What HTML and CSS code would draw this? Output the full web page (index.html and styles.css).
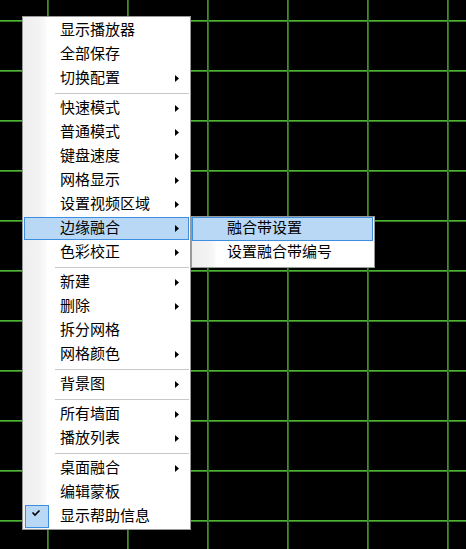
FILE: index.html
```html
<!DOCTYPE html>
<html lang="zh-CN">
<head>
<meta charset="utf-8">
<title>菜单</title>
<link rel="stylesheet" href="styles.css">
</head>
<body>
<div class="desktop">
  <div class="menu main-menu">
    <div class="item"><span class="label">显示播放器</span></div>
    <div class="item"><span class="label">全部保存</span></div>
    <div class="item"><span class="label">切换配置</span><svg class="arrow" width="4" height="7" viewBox="0 0 4 7"><polygon points="0,0 4,3.5 0,7"/></svg></div>
    <div class="sep"></div>
    <div class="item"><span class="label">快速模式</span><svg class="arrow" width="4" height="7" viewBox="0 0 4 7"><polygon points="0,0 4,3.5 0,7"/></svg></div>
    <div class="item"><span class="label">普通模式</span><svg class="arrow" width="4" height="7" viewBox="0 0 4 7"><polygon points="0,0 4,3.5 0,7"/></svg></div>
    <div class="item"><span class="label">键盘速度</span><svg class="arrow" width="4" height="7" viewBox="0 0 4 7"><polygon points="0,0 4,3.5 0,7"/></svg></div>
    <div class="item"><span class="label">网格显示</span><svg class="arrow" width="4" height="7" viewBox="0 0 4 7"><polygon points="0,0 4,3.5 0,7"/></svg></div>
    <div class="item"><span class="label">设置视频区域</span><svg class="arrow" width="4" height="7" viewBox="0 0 4 7"><polygon points="0,0 4,3.5 0,7"/></svg></div>
    <div class="item hl"><span class="label">边缘融合</span><svg class="arrow" width="4" height="7" viewBox="0 0 4 7"><polygon points="0,0 4,3.5 0,7"/></svg></div>
    <div class="item"><span class="label">色彩校正</span><svg class="arrow" width="4" height="7" viewBox="0 0 4 7"><polygon points="0,0 4,3.5 0,7"/></svg></div>
    <div class="sep"></div>
    <div class="item"><span class="label">新建</span><svg class="arrow" width="4" height="7" viewBox="0 0 4 7"><polygon points="0,0 4,3.5 0,7"/></svg></div>
    <div class="item"><span class="label">删除</span><svg class="arrow" width="4" height="7" viewBox="0 0 4 7"><polygon points="0,0 4,3.5 0,7"/></svg></div>
    <div class="item"><span class="label">拆分网格</span></div>
    <div class="item"><span class="label">网格颜色</span><svg class="arrow" width="4" height="7" viewBox="0 0 4 7"><polygon points="0,0 4,3.5 0,7"/></svg></div>
    <div class="sep"></div>
    <div class="item"><span class="label">背景图</span><svg class="arrow" width="4" height="7" viewBox="0 0 4 7"><polygon points="0,0 4,3.5 0,7"/></svg></div>
    <div class="sep"></div>
    <div class="item"><span class="label">所有墙面</span><svg class="arrow" width="4" height="7" viewBox="0 0 4 7"><polygon points="0,0 4,3.5 0,7"/></svg></div>
    <div class="item"><span class="label">播放列表</span><svg class="arrow" width="4" height="7" viewBox="0 0 4 7"><polygon points="0,0 4,3.5 0,7"/></svg></div>
    <div class="sep"></div>
    <div class="item"><span class="label">桌面融合</span><svg class="arrow" width="4" height="7" viewBox="0 0 4 7"><polygon points="0,0 4,3.5 0,7"/></svg></div>
    <div class="item"><span class="label">编辑蒙板</span></div>
    <div class="item checked"><span class="check"><svg width="24" height="23" viewBox="0 0 24 23"><path d="M7.5 7.5 L10 10 L14.5 5.5" fill="none" stroke="#000" stroke-width="1.6"/></svg></span><span class="label">显示帮助信息</span></div>
  </div>
  <div class="menu sub-menu">
    <div class="sub-item hl"><span class="label">融合带设置</span></div>
    <div class="sub-item"><span class="label">设置融合带编号</span></div>
  </div>
</div>
</body>
</html>
```
FILE: styles.css
```css
html, body {
  margin: 0;
  padding: 0;
}

body {
  width: 466px;
  height: 549px;
  overflow: hidden;
  font-family: "Noto Sans CJK SC", "Noto Sans", sans-serif;
  font-size: 15px;
  color: #000;
}

.desktop {
  position: relative;
  width: 466px;
  height: 549px;
  background-color: #000;
  background-image:
    linear-gradient(to right, #3f8f2d 1px, #2f6c22 1px, #2f6c22 2px, transparent 2px),
    linear-gradient(to bottom, #4cb533 1px, #347d25 1px, #347d25 2px, transparent 2px);
  background-size: 80px 100%, 100% 50px;
  background-position: 47px 0, 0 20px;
}

.menu {
  position: absolute;
  box-sizing: border-box;
  border: 1px solid #999;
  background: linear-gradient(to right, #eeeeee 0, #f3f3f3 16px, #f9f9f9 22px, #fff 25px);
}

.main-menu {
  left: 22px;
  top: 16px;
  width: 169px;
  height: 514px;
  padding: 1px 0;
}

.item {
  display: flex;
  align-items: flex-start;
  box-sizing: border-box;
  height: 24px;
  border: 1px solid transparent;
  border-bottom: 0;
  padding: 0 10px 0 36px;
  background-clip: padding-box;
}

.label {
  line-height: 20px;
  white-space: nowrap;
}

.arrow {
  display: block;
  margin-left: auto;
  margin-top: 8px;
  fill: #000;
}

.hl {
  background-color: #b9d8f5;
  box-shadow: inset 0 0 0 1px #3c8fe0;
}

.item.checked {
  padding-left: 1px;
}

.check {
  display: block;
  box-sizing: border-box;
  width: 24px;
  height: 23px;
  margin-right: 11px;
  background: #b9d8f5;
  border: 1px solid #3c8fe0;
}

.check svg {
  display: block;
  margin: -1px 0 0 -1px;
}

.sep {
  margin: 3px 1px 2px 32px;
  border-top: 1px solid #c8c8c8;
}

.sub-menu {
  left: 191px;
  top: 216px;
  width: 184px;
  height: 52px;
}

.sub-item {
  display: flex;
  height: 24px;
  margin-right: 1px;
  padding-left: 35px;
}
```
